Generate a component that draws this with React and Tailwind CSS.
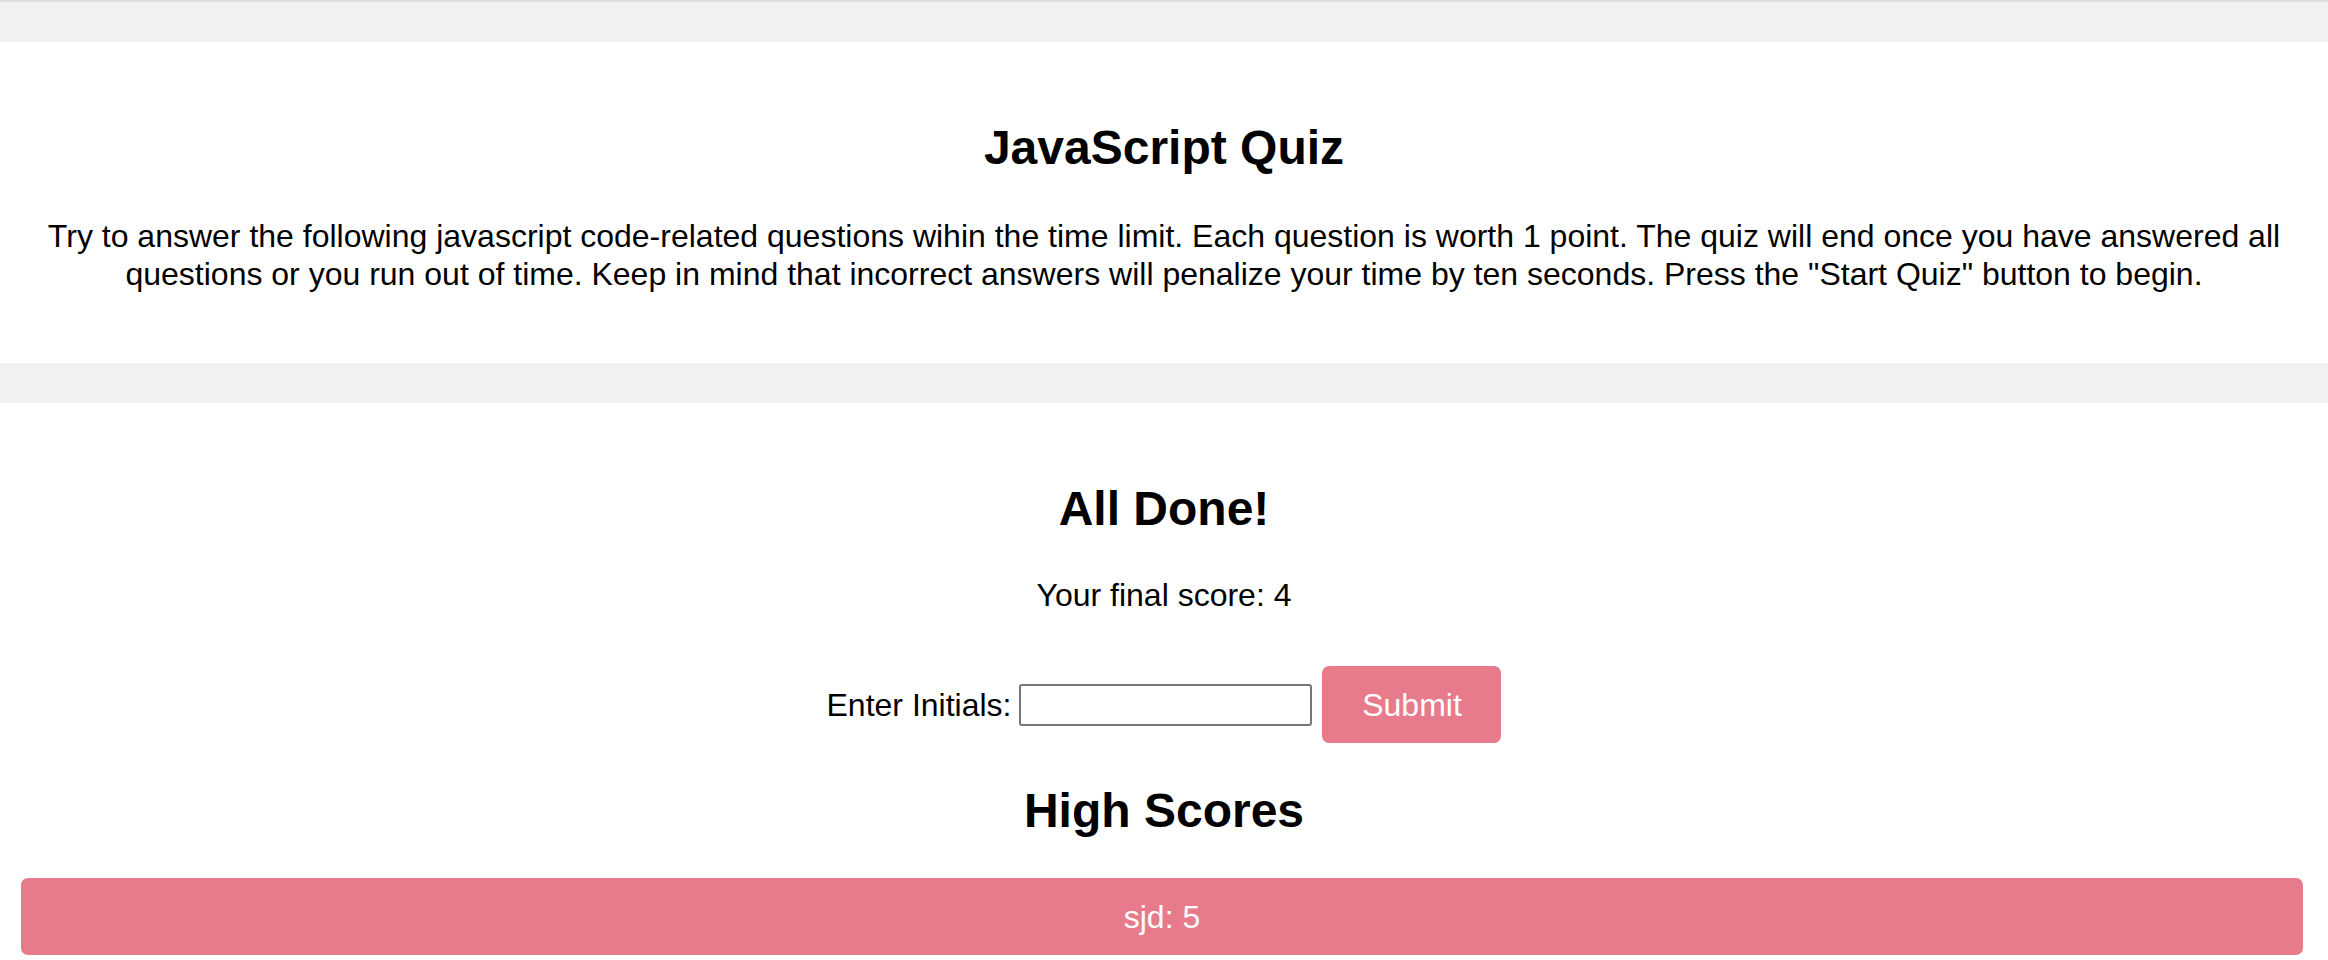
export default function App() {
  return (
    <div
      className="w-full min-h-screen bg-white text-black"
      style={{ fontFamily: '"Liberation Sans", Arial, Helvetica, sans-serif' }}
    >
      <div className="h-[42px] border-t-2 border-[#dddddd] bg-[#f2f2f2]" />
      <header className="flex h-[321px] flex-col items-center pt-[78px] text-center">
        <h1 className="text-[48px] font-bold leading-[55px]">JavaScript Quiz</h1>
        <p className="mt-[42px] px-[30px] text-[32px] leading-[38px]">
          Try to answer the following javascript code-related questions wihin the time limit. Each
          question is worth 1 point. The quiz will end once you have answered all questions or you run
          out of time. Keep in mind that incorrect answers will penalize your time by ten seconds. Press
          the "Start Quiz" button to begin.
        </p>
      </header>
      <div className="h-[40px] bg-[#f2f2f2]" />
      <main className="flex flex-col items-center pt-[78px] text-center">
        <h2 className="text-[48px] font-bold leading-[55px]">All Done!</h2>
        <p className="mt-[41px] text-[32px] leading-[36px]">Your final score: 4</p>
        <div className="mt-[53px] flex items-center">
          <label className="text-[32px] leading-[36px]">Enter Initials:</label>
          <input
            type="text"
            className="ml-[8px] h-[42px] w-[293px] rounded-[3px] border-2 border-[#767676] bg-white px-2 text-[20px] outline-none"
          />
          <button className="ml-[10px] h-[77px] w-[179px] rounded-[7px] bg-[#e77b8c] text-[32px] leading-[36px] text-white">
            Submit
          </button>
        </div>
        <h2 className="mt-[40px] text-[48px] font-bold leading-[55px]">High Scores</h2>
        <ul className="mt-[40px] w-full pl-[21px] pr-[25px]">
          <li className="flex h-[77px] items-center justify-center rounded-[7px] bg-[#e77b8c] text-[32px] leading-[36px] text-white">
            sjd: 5
          </li>
        </ul>
      </main>
    </div>
  );
}
